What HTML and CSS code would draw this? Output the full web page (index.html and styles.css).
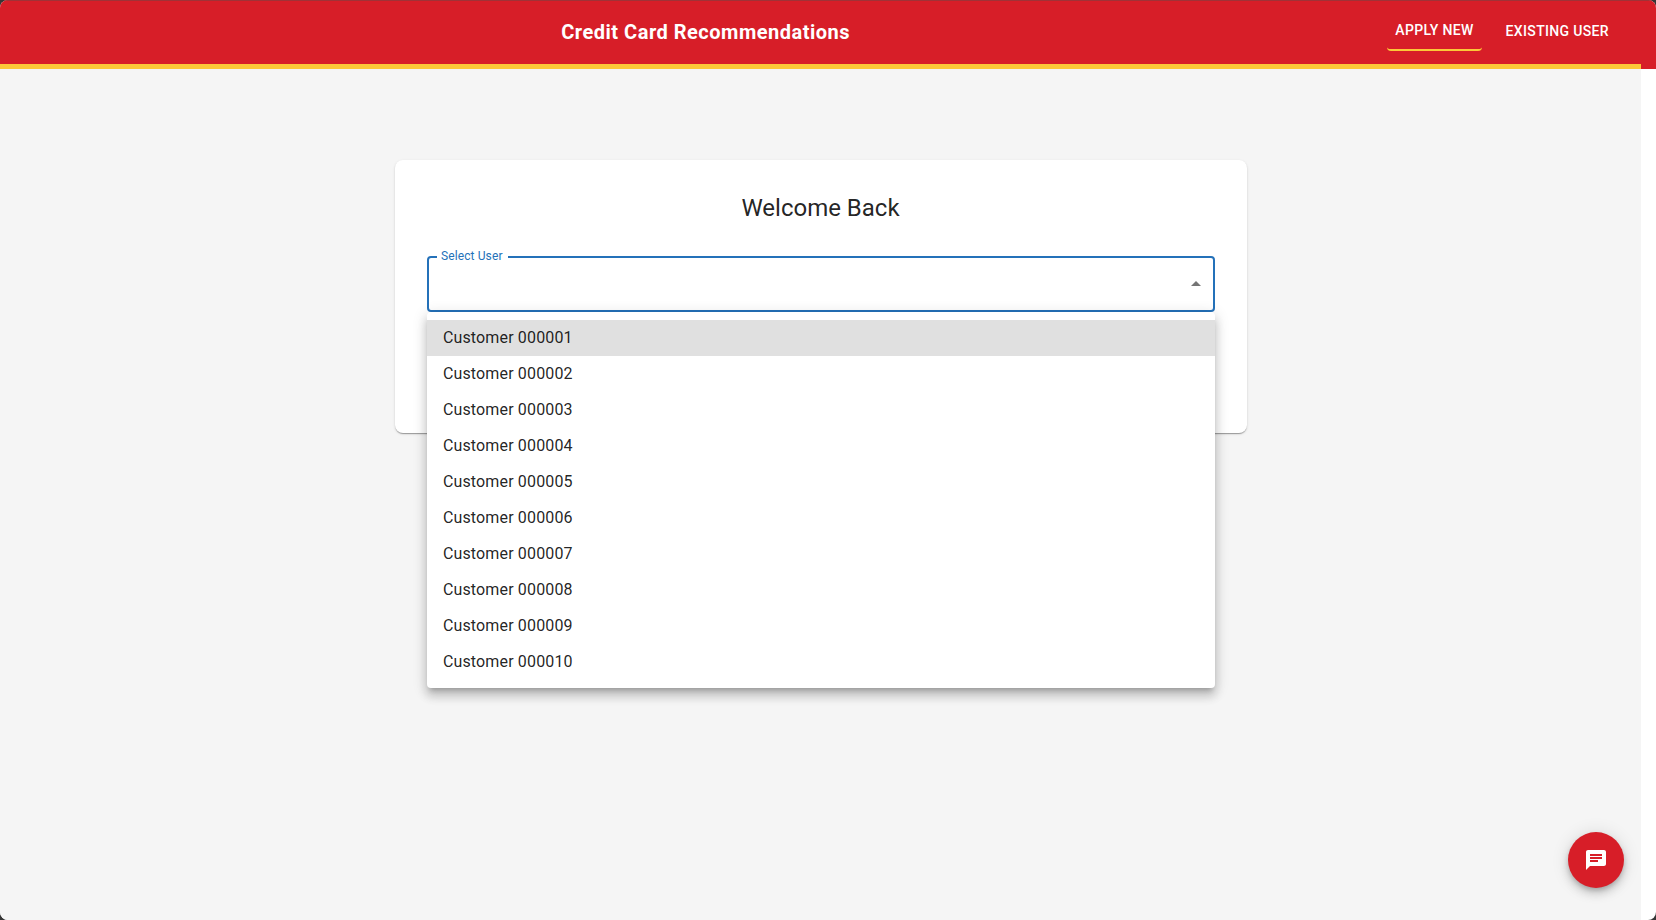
FILE: index.html
```html
<!DOCTYPE html>
<html lang="en">
<head>
<meta charset="utf-8">
<title>Credit Card Recommendations</title>
<link rel="stylesheet" href="styles.css">
</head>
<body>
<div class="window">
  <header class="app-bar">
    <div class="toolbar">
      <h1 class="brand">Credit Card Recommendations</h1>
      <nav class="nav">
        <a class="nav-link nav-link-active">APPLY NEW</a>
        <a class="nav-link">EXISTING USER</a>
      </nav>
    </div>
  </header>
  <main class="page">
    <section class="card">
      <h2 class="card-title">Welcome Back</h2>
      <div class="select">
        <span class="select-label">Select User</span>
        <svg class="select-arrow" viewBox="0 0 24 24"><path d="M7 14l5-5 5 5z"/></svg>
        <ul class="menu">
          <li class="option option-focused">Customer 000001</li>
          <li class="option">Customer 000002</li>
          <li class="option">Customer 000003</li>
          <li class="option">Customer 000004</li>
          <li class="option">Customer 000005</li>
          <li class="option">Customer 000006</li>
          <li class="option">Customer 000007</li>
          <li class="option">Customer 000008</li>
          <li class="option">Customer 000009</li>
          <li class="option">Customer 000010</li>
        </ul>
      </div>
    </section>
  </main>
  <button class="fab" aria-label="Open chat">
    <svg viewBox="0 0 24 24"><path d="M20 2H4c-1.1 0-1.99.9-1.99 2L2 22l4-4h14c1.1 0 2-.9 2-2V4c0-1.1-.9-2-2-2zM6 9h12v2H6V9zm8 5H6v-2h8v2zm4-6H6V6h12v2z"/></svg>
  </button>
</div>
</body>
</html>
```
FILE: styles.css
```css
* { box-sizing: border-box; }
body {
  margin: 0;
  background: #353535;
  font-family: Roboto, "Liberation Sans", sans-serif;
  color: rgba(0, 0, 0, 0.87);
}
.window {
  position: relative;
  display: flex;
  flex-direction: column;
  height: 920px;
  background: #fff;
  border-radius: 8px;
  overflow: hidden;
}
.app-bar {
  height: 69px;
  padding-right: 15px;
  background: #d71e28;
  box-shadow: inset 0 1px 0 #a03237;
}
.toolbar {
  display: flex;
  align-items: center;
  height: 69px;
  padding: 0 24px;
  border-bottom: 5px solid #fcc838;
}
.brand {
  flex: 1;
  margin: 0;
  text-align: center;
  font-size: 20px;
  font-weight: 700;
  line-height: 32px;
  letter-spacing: 0.5px;
  color: #fff;
}
.nav { display: flex; align-items: center; gap: 16px; }
.nav-link {
  padding: 5px 8px 7px;
  border-radius: 4px;
  font-size: 14px;
  font-weight: 500;
  line-height: 24.5px;
  letter-spacing: 0.34px;
  color: #fff;
}
.nav-link-active { border-bottom: 2px solid #fcc838; }
.page {
  flex: 1;
  margin-right: 15px;
  padding-top: 91px;
  background: #f5f5f5;
}
.card {
  width: 852px;
  height: 273px;
  margin: 0 auto;
  padding: 32px;
  border-radius: 8px;
  background: #fff;
  box-shadow: 0 2px 1px -1px rgba(0,0,0,.2), 0 1px 1px rgba(0,0,0,.14), 0 1px 3px rgba(0,0,0,.12);
}
.card-title {
  margin: 0 0 32px;
  text-align: center;
  font-size: 24px;
  font-weight: 400;
  line-height: 32px;
}
.select {
  position: relative;
  display: flex;
  align-items: center;
  justify-content: flex-end;
  height: 56px;
  padding-right: 5px;
  border: 2px solid #2471b9;
  border-radius: 4px;
}
.select-label {
  position: absolute;
  top: -10px;
  left: 8px;
  padding: 0 5.5px 0 4.5px;
  background: #fff;
  font-size: 12px;
  line-height: 17px;
  letter-spacing: 0.11px;
  color: #2471b9;
}
.select-arrow { width: 24px; height: 24px; fill: #757575; }
.menu {
  position: absolute;
  top: 54px;
  left: -2px;
  width: 788px;
  margin: 0;
  padding: 8px 0;
  list-style: none;
  border-radius: 4px;
  background: #fff;
  box-shadow: 0 5px 5px -3px rgba(0,0,0,.2), 0 8px 10px 1px rgba(0,0,0,.14), 0 3px 14px 2px rgba(0,0,0,.12);
}
.option {
  padding: 6px 16px 6px 16.4px;
  font-size: 16px;
  line-height: 24px;
  letter-spacing: 0.15px;
}
.option-focused { background: #e0e0e0; }
.fab {
  position: absolute;
  right: 32px;
  bottom: 32px;
  display: flex;
  align-items: center;
  justify-content: center;
  width: 56px;
  height: 56px;
  padding: 0;
  border: 0;
  border-radius: 50%;
  background: #d71e28;
  box-shadow: 0 3px 5px -1px rgba(0,0,0,.2), 0 6px 10px rgba(0,0,0,.14), 0 1px 18px rgba(0,0,0,.12);
}
.fab svg { width: 24px; height: 24px; fill: #fff; }
```
